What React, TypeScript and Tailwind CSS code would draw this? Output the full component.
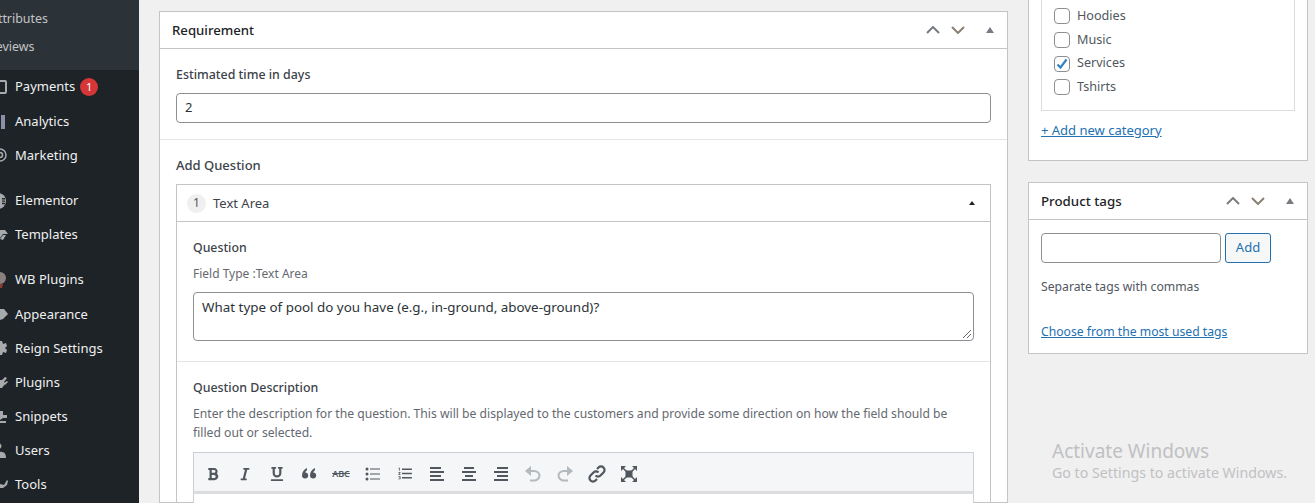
import type { ReactNode } from 'react'
import { FaBold, FaItalic, FaUnderline } from 'react-icons/fa'
import { MdFormatListNumbered } from 'react-icons/md'

const iconColor = '#a7aaad'

function Clip({ children }: { children: ReactNode }) {
  return (
    <svg width="9" height="20" viewBox="0 0 9 20" className="shrink-0" fill={iconColor}>
      {children}
    </svg>
  )
}

const menu: { label: string; top?: boolean; nudge?: boolean; badge?: boolean; icon: ReactNode }[] = [
  {
    label: 'Payments',
    badge: true,
    icon: <rect x="-6" y="4" width="12" height="12" fill="none" stroke={iconColor} strokeWidth="2" rx="1" />,
  },
  { label: 'Analytics', nudge: true, icon: <rect x="1" y="3" width="4" height="14" fill="#8c8fa8" /> },
  {
    label: 'Marketing',
    icon: (
      <>
        <circle cx="0" cy="9" r="6" fill="none" stroke={iconColor} strokeWidth="1.5" />
        <circle cx="0" cy="9" r="2.5" fill="none" stroke={iconColor} strokeWidth="1.5" />
      </>
    ),
  },
  {
    label: 'Elementor',
    top: true,
    icon: (
      <>
        <circle cx="-2" cy="10" r="8" />
        <path d="M2 7h3v1.4H2zM2 9.4h3v1.4H2zM2 11.8h3v1.4H2z" fill="#1d2327" />
      </>
    ),
  },
  { label: 'Templates', icon: <path d="M0 5h5l3 4H3L0 13zM0 14l3-4h3l-3 5z" /> },
  {
    label: 'WB Plugins',
    top: true,
    icon: (
      <>
        <circle cx="0" cy="8" r="6" fill="#8a8080" />
        <path d="M-2 14h5l-1 4H0z" fill="#8b3a3a" />
      </>
    ),
  },
  { label: 'Appearance', nudge: true, icon: <path d="M0 4h4l4 5-5 5-3 1z" /> },
  {
    label: 'Reign Settings',
    icon: <path d="M0 2h2l1 3 3-1 1 3-2 2 2 2-1 3-3-1-1 3H0z" />,
  },
  { label: 'Plugins', icon: <path d="M0 7h2l3-3 2 1-3 4 1 2-3 4H0zM4 10l3-2 1 1-3 3z" /> },
  { label: 'Snippets', icon: <path d="M0 4h3v4h4v3H3l-3 2zM0 14h6v2H0z" /> },
  { label: 'Users', icon: <path d="M-4 17c0-4 3-7 6-6 3 0 4 3 4 6zM-2 8a3 3 0 1 1 1 0z" /> },
  { label: 'Tools', icon: <path d="M0 9l4 1 3-5 1 1-1 4-4 3H0z" /> },
]

function Sidebar() {
  return (
    <aside className="w-[139px] shrink-0 overflow-hidden bg-[#1d2327] text-[#f0f0f1]">
      <div className="bg-[#2c3338] pb-[9px] pt-[5px] text-[12.4px] text-[#c3c4c7]">
        <div className="-ml-[10px] h-7 leading-7">Attributes</div>
        <div className="-ml-[12px] h-7 leading-7">Reviews</div>
      </div>
      {menu.map((item) => (
        <div
          key={item.label}
          className={`flex h-[34px] items-center gap-[6px] ${item.top ? 'mt-[11px]' : ''} ${item.nudge ? 'mt-px' : ''}`}
        >
          <Clip>{item.icon}</Clip>
          <span>{item.label}</span>
          {item.badge && (
            <span className="-ml-px flex h-[18px] w-[18px] items-center justify-center rounded-full bg-[#d63638] text-[11px] text-white">
              1
            </span>
          )}
        </div>
      ))}
    </aside>
  )
}

function Chevron({ up }: { up?: boolean }) {
  return (
    <svg width="14" height="8" viewBox="0 0 14 8" fill="none" stroke={up ? '#787c82' : '#8a8173'} strokeWidth="2">
      <path d={up ? 'M1 7l6-6 6 6' : 'M1 1l6 6 6-6'} />
    </svg>
  )
}

function BoxControls() {
  return (
    <div className="flex items-center">
      <Chevron up />
      <span className="w-[11px]" />
      <Chevron />
      <span className="ml-[21px] h-0 w-0 border-x-[4.5px] border-b-[6px] border-x-transparent border-b-[#787c82]" />
    </div>
  )
}

function Tool({ children }: { children: ReactNode }) {
  return <span className="flex h-[22px] w-[22px] items-center justify-center text-[#50575e]">{children}</span>
}

function Toolbar() {
  const bar = '#50575e'
  const faded = '#b4b9be'
  return (
    <div className="flex h-[42px] items-center gap-[10px] border border-b-[3px] border-[#ccd0d4] border-b-[#dcdcde] bg-[#f5f6f7] pl-[8px] pt-[3px]">
      <Tool>
        <FaBold size={14} />
      </Tool>
      <Tool>
        <FaItalic size={14} />
      </Tool>
      <Tool>
        <FaUnderline size={14} />
      </Tool>
      <svg width="22" height="22" viewBox="0 0 22 22" fill={bar}>
        <path d="M4 12.500c0-3.500 2-6 5-7.500v2.200c-1 .6-1.600 1.400-1.800 2.300 1.800 0 3 1.300 3 3 0 1.800-1.300 3-3 3-2 0-3.200-1.200-3.200-3zM12 12.500c0-3.500 2-6 5-7.500v2.200c-1 .6-1.600 1.400-1.800 2.300 1.800 0 3 1.300 3 3 0 1.800-1.300 3-3 3-2 0-3.200-1.200-3.200-3z" />
      </svg>
      <Tool>
        <span className="text-[9px] font-semibold leading-none line-through">ABC</span>
      </Tool>
      <svg width="22" height="22" viewBox="0 0 22 22" fill={bar}>
        <circle cx="5" cy="6" r="1.500" />
        <circle cx="5" cy="11" r="1.500" />
        <circle cx="5" cy="16" r="1.500" />
        <path d="M8 5.500h10v1H8zM8 10.500h10v1H8zM8 15.500h10v1H8z" />
      </svg>
      <Tool>
        <MdFormatListNumbered size={17} />
      </Tool>
      <svg width="22" height="22" viewBox="0 0 22 22" fill={bar}>
        <path d="M4 4h11v2H4zM4 8h14v2H4zM4 12h11v2H4zM4 16h14v2H4z" />
      </svg>
      <svg width="22" height="22" viewBox="0 0 22 22" fill={bar}>
        <path d="M6 4h10v2H6zM4 8h14v2H4zM7 12h8v2H7zM4 16h14v2H4z" />
      </svg>
      <svg width="22" height="22" viewBox="0 0 22 22" fill={bar}>
        <path d="M7 4h11v2H7zM4 8h14v2H4zM7 12h11v2H7zM4 16h14v2H4z" />
      </svg>
      <svg width="22" height="22" viewBox="0 0 22 22" fill={faded}>
        <path d="M3 8l6-5v10z" />
        <path d="M8 8h4c3 0 5.500 2 5.500 4.500S15 17.500 12 17.500H8" fill="none" stroke={faded} strokeWidth="2" />
      </svg>
      <svg width="22" height="22" viewBox="0 0 22 22" fill={faded}>
        <path d="M19 8l-6-5v10z" />
        <path d="M14 8h-4c-3 0-5.500 2-5.500 4.500S7 17.500 10 17.500h4" fill="none" stroke={faded} strokeWidth="2" />
      </svg>
      <svg width="22" height="22" viewBox="0 0 22 22" fill="none" stroke={bar} strokeWidth="2.200">
        <path d="M9.500 12.500a3.500 3.500 0 0 0 5 0l3-3a3.500 3.500 0 0 0-5-5l-1.500 1.500" />
        <path d="M12.500 9.500a3.500 3.500 0 0 0-5 0l-3 3a3.500 3.500 0 0 0 5 5l1.500-1.500" />
      </svg>
      <svg width="22" height="22" viewBox="0 0 22 22" fill={bar}>
        <path d="M3 3h5l-5 5zM19 3v5l-5-5zM3 19v-5l5 5zM19 19h-5l5-5zM7.500 7.500h7v7h-7z" />
        <path d="M5 5l12 12M17 5L5 17" stroke={bar} strokeWidth="1.500" />
      </svg>
    </div>
  )
}

function Requirement() {
  return (
    <section className="w-[849px] shrink-0 border border-[#c3c4c7] bg-white text-[#3c434a]">
      <header className="flex h-[37px] items-center justify-between border-b border-[#c3c4c7] pl-3 pr-[13px]">
        <h2 className="pt-[2px] text-[13.2px] font-medium text-[#1d2327]">Requirement</h2>
        <BoxControls />
      </header>

      <div className="border-b border-[#e5e5e5] px-4 pb-4 pt-4">
        <label className="block h-[18px] text-[12.4px] font-medium leading-[20px]">Estimated time in days</label>
        <div className="mt-[10px] flex h-[30px] items-center rounded border border-[#8c8f94] px-2 text-[#2c3338]">2</div>
      </div>

      <div className="px-4 pt-4">
        <h3 className="h-[18px] font-medium leading-[18px]">Add Question</h3>
        <div className="mt-[10px] border border-[#c3c4c7]">
          <div className="flex h-[37px] items-center gap-[7px] border-b border-[#c3c4c7] pl-[10px] pr-[15px]">
            <span className="flex h-[19px] w-[19px] items-center justify-center rounded-full bg-[#f0f0f1] text-[12px] text-[#50575e]">
              1
            </span>
            <span className="pt-[2px]">Text Area</span>
            <span className="ml-auto h-0 w-0 border-x-[3px] border-b-[4px] border-x-transparent border-b-[#1d2327]" />
          </div>

          <div className="border-b border-[#e5e5e5] px-4 pb-5 pt-4">
            <div className="h-[18px] text-[12.3px] font-medium leading-[20px]">Question</div>
            <div className="mt-[9px] h-[18px] text-[12px] leading-[18px] text-[#646970]">Field Type :Text Area</div>
            <div className="relative mt-[9px] h-[49px] rounded border border-[#8c8f94] px-2 pt-[4px] text-[13.4px] text-[#2c3338]">
              What type of pool do you have (e.g., in-ground, above-ground)?
              <svg width="10" height="10" viewBox="0 0 10 10" className="absolute bottom-[1px] right-[1px]" stroke="#646970" fill="none">
                <path d="M1 9l8-8M5 9l4-4" />
              </svg>
            </div>
          </div>

          <div className="px-4 pt-4">
            <div className="h-[18px] text-[12.4px] font-medium leading-[20px]">Question Description</div>
            <p className="mt-2 text-[12.15px] leading-[19px] text-[#646970]">
              Enter the description for the question. This will be displayed to the customers and provide some direction on how the field should be filled out or selected.
            </p>
            <div className="mt-[10px]">
              <Toolbar />
              <div className="h-10 border-x border-[#ccd0d4] bg-white" />
            </div>
          </div>
        </div>
      </div>
    </section>
  )
}

function Categories() {
  const items = [
    { name: 'Hoodies', checked: false },
    { name: 'Music', checked: false },
    { name: 'Services', checked: true },
    { name: 'Tshirts', checked: false },
  ]
  return (
    <section className="-mt-[30px] h-[180px] border border-[#c3c4c7] bg-white px-3 text-[#50575e]">
      <div className="flex h-[129px] flex-col justify-end border border-t-0 border-[#dcdcde] pb-[11px] pl-[12px]">
        {items.map((it) => (
          <div key={it.name} className="flex h-[23.6px] items-center gap-[7px]">
            <span className="flex h-4 w-4 items-center justify-center rounded border border-[#8c8f94] bg-white">
              {it.checked && (
                <svg width="12" height="12" viewBox="0 0 12 12" fill="none" stroke="#3582c4" strokeWidth="2.200">
                  <path d="M1.500 6.500l3 3 6-8" />
                </svg>
              )}
            </span>
            <span className="text-[12.6px]">{it.name}</span>
          </div>
        ))}
      </div>
      <a className="mt-[10px] block leading-[18px] text-[#2271b1] underline">+ Add new category</a>
    </section>
  )
}

function ProductTags() {
  return (
    <section className="mt-[21px] border border-[#c3c4c7] bg-white text-[#50575e]">
      <header className="flex h-[37px] items-center justify-between border-b border-[#c3c4c7] pl-3 pr-[13px]">
        <h2 className="pt-[2px] text-[13.3px] font-medium text-[#1d2327]">Product tags</h2>
        <BoxControls />
      </header>
      <div className="px-3 pb-3 pt-[13px]">
        <div className="flex gap-1">
          <div className="h-[30px] w-[180px] rounded border border-[#8c8f94] bg-white" />
          <button className="h-[30px] w-[46px] rounded-[3px] border border-[#2271b1] bg-[#f6f7f7] text-[#2271b1]">Add</button>
        </div>
        <p className="mt-[15px] text-[12.2px] leading-[18px]">Separate tags with commas</p>
        <a className="mt-[27px] block text-[12.2px] leading-[18px] text-[#2271b1] underline">Choose from the most used tags</a>
      </div>
    </section>
  )
}

export default function App() {
  return (
    <div className="relative flex h-[503px] w-[1315px] overflow-hidden bg-[#f0f0f1] text-[13px] font-['Noto_Sans',sans-serif]">
      <Sidebar />
      <main className="flex gap-5 pl-5 pt-[11px]">
        <Requirement />
        <aside className="w-[280px] shrink-0">
          <Categories />
          <ProductTags />
        </aside>
      </main>
      <div className="absolute left-[1052px] top-[439px] text-[#c0c1c2]">
        <div className="text-[19px] leading-[24px]">Activate Windows</div>
        <div className="text-[14.2px] leading-[20px]">Go to Settings to activate Windows.</div>
      </div>
    </div>
  )
}
